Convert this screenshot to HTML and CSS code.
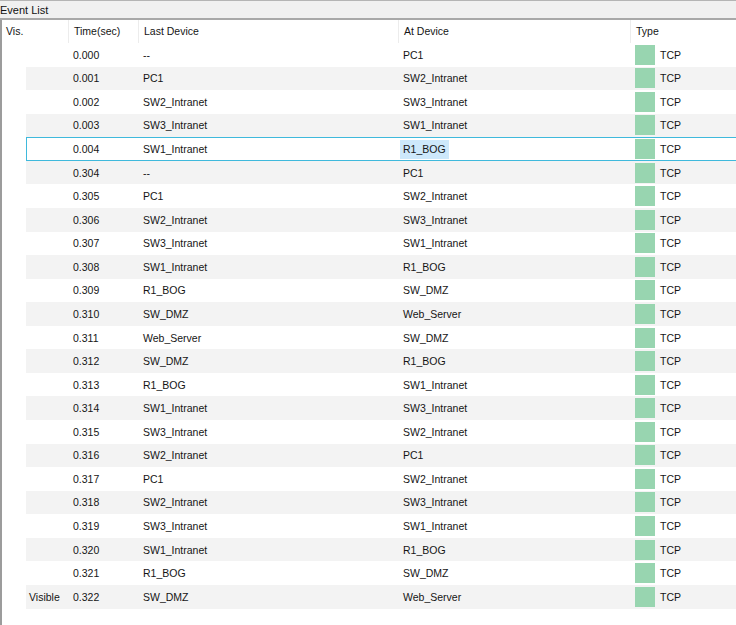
FILE: index.html
```html
<!DOCTYPE html>
<html>
<head>
<meta charset="utf-8">
<link rel="stylesheet" href="styles.css">
</head>
<body>
<div class="titlebar">Event List</div>
<div class="panel">
  <div class="header">
    <div class="hc first">Vis.</div>
    <div class="hc">Time(sec)</div>
    <div class="hc">Last Device</div>
    <div class="hc">At Device</div>
    <div class="hc">Type</div>
  </div>
  <div class="rows">
    <div class="row"><div class="c vis"></div><div class="c">0.000</div><div class="c">--</div><div class="c">PC1</div><div class="c type"><span class="sw"></span>TCP</div></div>
    <div class="row"><div class="c vis"></div><div class="c">0.001</div><div class="c">PC1</div><div class="c">SW2_Intranet</div><div class="c type"><span class="sw"></span>TCP</div></div>
    <div class="row"><div class="c vis"></div><div class="c">0.002</div><div class="c">SW2_Intranet</div><div class="c">SW3_Intranet</div><div class="c type"><span class="sw"></span>TCP</div></div>
    <div class="row"><div class="c vis"></div><div class="c">0.003</div><div class="c">SW3_Intranet</div><div class="c">SW1_Intranet</div><div class="c type"><span class="sw"></span>TCP</div></div>
    <div class="row selected"><div class="c vis"></div><div class="c">0.004</div><div class="c">SW1_Intranet</div><div class="c"><span class="hl">R1_BOG</span></div><div class="c type"><span class="sw"></span>TCP</div></div>
    <div class="row"><div class="c vis"></div><div class="c">0.304</div><div class="c">--</div><div class="c">PC1</div><div class="c type"><span class="sw"></span>TCP</div></div>
    <div class="row"><div class="c vis"></div><div class="c">0.305</div><div class="c">PC1</div><div class="c">SW2_Intranet</div><div class="c type"><span class="sw"></span>TCP</div></div>
    <div class="row"><div class="c vis"></div><div class="c">0.306</div><div class="c">SW2_Intranet</div><div class="c">SW3_Intranet</div><div class="c type"><span class="sw"></span>TCP</div></div>
    <div class="row"><div class="c vis"></div><div class="c">0.307</div><div class="c">SW3_Intranet</div><div class="c">SW1_Intranet</div><div class="c type"><span class="sw"></span>TCP</div></div>
    <div class="row"><div class="c vis"></div><div class="c">0.308</div><div class="c">SW1_Intranet</div><div class="c">R1_BOG</div><div class="c type"><span class="sw"></span>TCP</div></div>
    <div class="row"><div class="c vis"></div><div class="c">0.309</div><div class="c">R1_BOG</div><div class="c">SW_DMZ</div><div class="c type"><span class="sw"></span>TCP</div></div>
    <div class="row"><div class="c vis"></div><div class="c">0.310</div><div class="c">SW_DMZ</div><div class="c">Web_Server</div><div class="c type"><span class="sw"></span>TCP</div></div>
    <div class="row"><div class="c vis"></div><div class="c">0.311</div><div class="c">Web_Server</div><div class="c">SW_DMZ</div><div class="c type"><span class="sw"></span>TCP</div></div>
    <div class="row"><div class="c vis"></div><div class="c">0.312</div><div class="c">SW_DMZ</div><div class="c">R1_BOG</div><div class="c type"><span class="sw"></span>TCP</div></div>
    <div class="row"><div class="c vis"></div><div class="c">0.313</div><div class="c">R1_BOG</div><div class="c">SW1_Intranet</div><div class="c type"><span class="sw"></span>TCP</div></div>
    <div class="row"><div class="c vis"></div><div class="c">0.314</div><div class="c">SW1_Intranet</div><div class="c">SW3_Intranet</div><div class="c type"><span class="sw"></span>TCP</div></div>
    <div class="row"><div class="c vis"></div><div class="c">0.315</div><div class="c">SW3_Intranet</div><div class="c">SW2_Intranet</div><div class="c type"><span class="sw"></span>TCP</div></div>
    <div class="row"><div class="c vis"></div><div class="c">0.316</div><div class="c">SW2_Intranet</div><div class="c">PC1</div><div class="c type"><span class="sw"></span>TCP</div></div>
    <div class="row"><div class="c vis"></div><div class="c">0.317</div><div class="c">PC1</div><div class="c">SW2_Intranet</div><div class="c type"><span class="sw"></span>TCP</div></div>
    <div class="row"><div class="c vis"></div><div class="c">0.318</div><div class="c">SW2_Intranet</div><div class="c">SW3_Intranet</div><div class="c type"><span class="sw"></span>TCP</div></div>
    <div class="row"><div class="c vis"></div><div class="c">0.319</div><div class="c">SW3_Intranet</div><div class="c">SW1_Intranet</div><div class="c type"><span class="sw"></span>TCP</div></div>
    <div class="row"><div class="c vis"></div><div class="c">0.320</div><div class="c">SW1_Intranet</div><div class="c">R1_BOG</div><div class="c type"><span class="sw"></span>TCP</div></div>
    <div class="row"><div class="c vis"></div><div class="c">0.321</div><div class="c">R1_BOG</div><div class="c">SW_DMZ</div><div class="c type"><span class="sw"></span>TCP</div></div>
    <div class="row"><div class="c vis">Visible</div><div class="c">0.322</div><div class="c">SW_DMZ</div><div class="c">Web_Server</div><div class="c type"><span class="sw"></span>TCP</div></div>
  </div>
</div>
</body>
</html>
```
FILE: styles.css
```css
html, body {
  margin: 0;
  padding: 0;
  background: #ffffff;
  overflow: hidden;
}
body {
  font-family: "Liberation Sans", Arial, sans-serif;
  font-size: 10.5px;
  color: #151515;
  width: 736px;
  height: 625px;
}
.titlebar {
  height: 17px;
  line-height: 18px;
  background: #f0f0f0;
  border-top: 1px solid #b4b4b4;
  border-bottom: 2px solid #a8a8a8;
  padding-left: 0;
  font-size: 11px;
  color: #111;
}
.panel {
  border-left: 2px solid #9c9c9c;
  height: 605px;
}
.header {
  display: grid;
  grid-template-columns: 66px 70px 260px 232px 1fr;
  height: 23px;
}
.hc {
  line-height: 23px;
  padding-left: 5px;
  border-left: 1px solid #ececec;
  white-space: nowrap;
}
.hc.first {
  border-left: none;
  padding-left: 4px;
}
.rows {
  margin-left: 24px;
  margin-right: -2px;
}
.row {
  display: grid;
  grid-template-columns: 42px 70px 260px 232px 1fr;
  height: 23.57px;
  align-items: center;
  box-sizing: border-box;
}
.row:nth-child(even) {
  background: #f3f3f3;
}
.row.selected {
  box-shadow: inset 0 0 0 1px #3fb9dc;
}
.c {
  padding-left: 5px;
  white-space: nowrap;
}
.c.vis {
  padding-left: 3px;
}
.type {
  display: flex;
  align-items: center;
}
.sw {
  display: inline-block;
  width: 20px;
  height: 20px;
  background: #98d5b0;
  margin-right: 5px;
}
.hl {
  display: inline-block;
  background: #cde8fb;
  height: 19px;
  line-height: 19px;
  padding: 0 3px;
  margin-left: -3px;
}
```
